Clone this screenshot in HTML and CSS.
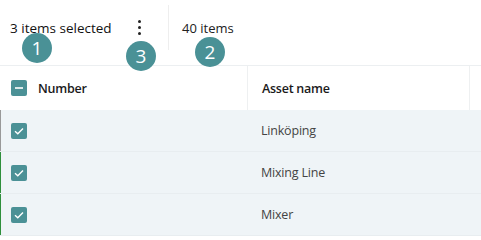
FILE: index.html
```html
<!DOCTYPE html>
<html>
<head>
<meta charset="utf-8">
<link rel="stylesheet" href="styles.css">
</head>
<body>
<div class="page">
  <div class="toolbar">
    <div class="toolbar-inner">
      <span class="selected">3 items selected</span>
      <span class="kebab"><i></i><i></i><i></i></span>
      <span class="divider"></span>
      <span class="count">40 items</span>
    </div>
    <span class="badge b1">1</span>
    <span class="badge b3">3</span>
    <span class="badge b2">2</span>
  </div>
  <div class="table">
    <div class="row head">
      <div class="cell c1">
        <span class="cb"><svg width="16" height="16" viewBox="0 0 16 16"><line x1="4" y1="8" x2="12" y2="8" stroke="#fff" stroke-width="1.6"/></svg></span>
        <span class="htext">Number</span>
      </div>
      <div class="cell c2"><span class="htext">Asset name</span></div>
      <div class="cell c3"></div>
    </div>
    <div class="row body grey">
      <div class="cell c1"><span class="cb"><svg width="16" height="16" viewBox="0 0 16 16"><polyline points="4,8.2 6.8,10.8 12,5.5" fill="none" stroke="#fff" stroke-width="1.4"/></svg></span></div>
      <div class="cell c2">Linköping</div>
      <div class="cell c3"></div>
    </div>
    <div class="row body green">
      <div class="cell c1"><span class="cb"><svg width="16" height="16" viewBox="0 0 16 16"><polyline points="4,8.2 6.8,10.8 12,5.5" fill="none" stroke="#fff" stroke-width="1.4"/></svg></span></div>
      <div class="cell c2">Mixing Line</div>
      <div class="cell c3"></div>
    </div>
    <div class="row body green">
      <div class="cell c1"><span class="cb"><svg width="16" height="16" viewBox="0 0 16 16"><polyline points="4,8.2 6.8,10.8 12,5.5" fill="none" stroke="#fff" stroke-width="1.4"/></svg></span></div>
      <div class="cell c2">Mixer</div>
      <div class="cell c3"></div>
    </div>
  </div>
</div>
</body>
</html>
```
FILE: styles.css
```css
* { box-sizing: border-box; }
html, body { margin: 0; padding: 0; background: #fff; }
body { font-family: "Open Sans", "Noto Sans", sans-serif; font-size: 13px; color: #333; }
.page { width: 481px; position: relative; }
.toolbar { position: relative; height: 66px; border-bottom: 1px solid #eceff1; padding-top: 5px; }
.toolbar-inner { display: flex; align-items: center; height: 45px; }
.selected { color: #111; font-size: 13.5px; padding-left: 10px; width: 134px; }
.kebab { display: flex; flex-direction: column; gap: 3px; width: 4px; align-items: center; margin-left: 3px; }
.kebab i { display: block; width: 3px; height: 3px; border-radius: 50%; background: #222; }
.divider { width: 1px; height: 45px; background: #eeeeee; margin-left: 27px; }
.count { color: #222; font-size: 13px; margin-left: 13px; }
.badge { position: absolute; width: 30px; height: 30px; border-radius: 50%; background: #4a9196; color: #fff; font-size: 19px; line-height: 30px; text-align: center; font-family: "Open Sans", sans-serif; }
.b1 { left: 22px; top: 33px; }
.b3 { left: 126px; top: 41px; }
.b2 { left: 195px; top: 37px; }
.table { display: flex; flex-direction: column; }
.row { display: grid; grid-template-columns: 247px 223px 11px; }
.head { height: 44px; background: #fff; }
.head .c2 { border-left: 1px solid #eef0f1; border-right: 1px solid #eef0f1; }
.cell { display: flex; align-items: center; }
.c1 { padding-left: 11px; gap: 11px; }
.c2 { padding-left: 14px; }
.htext { font-weight: 600; font-size: 12.5px; color: #1a1a1a; letter-spacing: -0.25px; }
.body { height: 42px; background: #eff4f7; border-bottom: 1px solid #e8edf0; }
.body .c2 { padding-left: 14px; color: #444; font-size: 12.5px; letter-spacing: -0.2px; }
.body.grey { box-shadow: inset 1px 0 0 #999; }
.body.green { box-shadow: inset 1px 0 0 #2f8f3c; }
.cb { width: 16px; height: 16px; border-radius: 2px; background: #4b9196; display: flex; }
```
